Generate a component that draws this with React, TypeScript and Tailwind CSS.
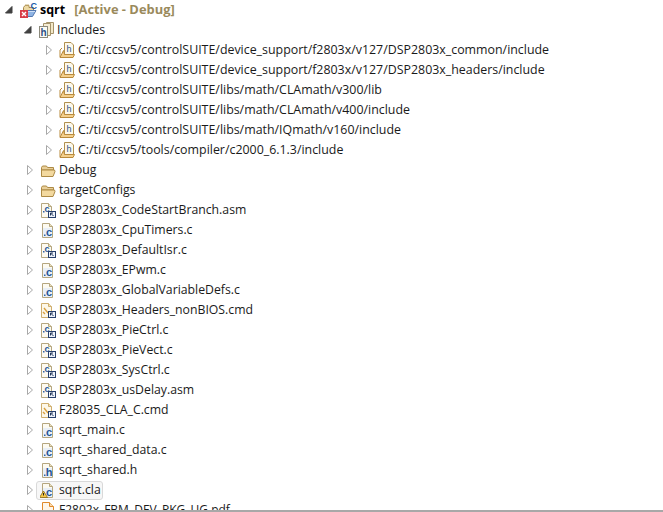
import React from 'react';

type IconKind = 'project' | 'includes' | 'incfolder' | 'folder' | 'linked' | 'c' | 'cmd' | 'h' | 'cla' | 'pdf';

const Sheet = ({ letter }: { letter: string }) => (
  <>
    <path d="M2.5 1.5H9.5L12.5 4.5V15.5H2.5Z" fill="#fdfaf0" stroke="#b5a67f" />
    <path d="M9.5 1.5V4.5H12.5" fill="#e9dfbe" stroke="#b5a67f" />
    <rect x="3" y="6" width="9" height="9" fill="#e9f0f8" />
    <rect x="4" y="12.5" width="1.5" height="1.5" fill="#2f63a3" />
    <text x="9" y="14" fontSize="11" fontWeight="700" textAnchor="middle" fill="#1f5596" fontFamily="'Liberation Sans', sans-serif">{letter}</text>
  </>
);

const LinkBadge = () => (
  <>
    <rect x="8.5" y="9.5" width="7" height="6" fill="#eef3fa" stroke="#27406b" />
    <path d="M10.5 11L13.5 14M10.5 11H13M10.5 11V13.5" fill="none" stroke="#1d3358" />
  </>
);

const Icon = ({ kind }: { kind: IconKind }) => {
  if (kind === 'project') {
    return (
      <svg width="18" height="16" viewBox="0 0 18 16" className="shrink-0">
        <path d="M4.5 5.5L6 3.5H10V5.5H14.5V10H4.5Z" fill="#ecd9a4" stroke="#a8894c" />
        <path d="M6 3H10" stroke="#c9b27a" />
        <path d="M2 14.5L5.5 8.5H17L13.5 14.5Z" fill="#8fb4e4" stroke="#5278b0" />
        <path d="M3 13.5L6 9.5H16" fill="none" stroke="#cfe0f5" />
        <text x="11.5" y="6.5" fontSize="9" fontWeight="700" fill="#1a5aa8" fontFamily="'Liberation Sans', sans-serif">C</text>
        <rect x="1" y="8" width="8" height="8" fill="#d83c48" />
        <path d="M3 10L7 14M7 10L3 14" stroke="#fff" strokeWidth="1.4" />
      </svg>
    );
  }
  if (kind === 'includes') {
    return (
      <svg width="16" height="16" viewBox="0 0 16 16" className="shrink-0">
        <path d="M8.5 .5H15.5V11.5H8.5Z" fill="#f3e8c8" stroke="#a5936a" />
        <path d="M5.5 1.5H12.5V13.5H5.5Z" fill="#f6edd3" stroke="#a5936a" />
        <rect x="1.5" y="4.5" width="8" height="11" fill="#fbfbf4" stroke="#8c8a7c" />
        <text x="5.5" y="13.5" fontSize="10" fontWeight="700" textAnchor="middle" fill="#2c4f86" fontFamily="'Liberation Sans', sans-serif">h</text>
      </svg>
    );
  }
  if (kind === 'incfolder') {
    return (
      <svg width="16" height="16" viewBox="0 0 16 16" className="shrink-0">
        <path d="M1 15V8L3 6" fill="none" stroke="#b98a3c" />
        <path d="M5.5 .5H12L14.5 3V12.5H5.5Z" fill="#fdf8ea" stroke="#b0904f" />
        <text x="10" y="10" fontSize="9" fontWeight="400" textAnchor="middle" fill="#2c4f86" fontFamily="'Liberation Sans', sans-serif">h</text>
        <path d="M1 15.5L4.5 8.5L5.5 12.5H15.5L14 15.5Z" fill="#f5cf8c" stroke="#b98a3c" />
      </svg>
    );
  }
  if (kind === 'folder') {
    return (
      <svg width="16" height="16" viewBox="0 0 16 16" className="shrink-0">
        <path d="M1.5 5.5L2.5 4H6.5L7.5 5.5H13.5V8H1.5Z" fill="#e9cf9a" stroke="#ad8a45" />
        <path d="M1.5 14.5V8H14.5L15 9.5L13 14.5Z" fill="#f3d99f" stroke="#ad8a45" />
      </svg>
    );
  }
  if (kind === 'linked') {
    return (
      <svg width="16" height="16" viewBox="0 0 16 16" className="shrink-0">
        <path d="M1.5 1.5H8.5L11.5 4.5V15.5H1.5Z" fill="#fdfaf0" stroke="#b5a67f" />
        <path d="M8.5 1.5V4.5H11.5" fill="#e9dfbe" stroke="#b5a67f" />
        <rect x="3" y="9" width="1.5" height="1.5" fill="#2f63a3" />
        <text x="7" y="10" fontSize="9" fontWeight="700" textAnchor="middle" fill="#1f5596" fontFamily="'Liberation Sans', sans-serif">c</text>
        <LinkBadge />
      </svg>
    );
  }
  if (kind === 'cmd') {
    return (
      <svg width="16" height="16" viewBox="0 0 16 16" className="shrink-0">
        <path d="M1.5 1.5H8.5L11.5 4.5V15.5H1.5Z" fill="#fdf8ea" stroke="#cfae6e" />
        <path d="M8.5 1.5V4.5H11.5" fill="#f3e2b8" stroke="#cfae6e" />
        <path d="M4 6L8 11M3 10L5 12" stroke="#d8a040" strokeWidth="1.4" />
        <LinkBadge />
      </svg>
    );
  }
  if (kind === 'pdf') {
    return (
      <svg width="16" height="16" viewBox="0 0 16 16" className="shrink-0">
        <path d="M2.5 .5H9.5L13.5 4.5V15.5H2.5Z" fill="#fff7ea" stroke="#e08a2c" />
        <path d="M9.5 .5V4.5H13.5" fill="#f9dcb0" stroke="#e08a2c" />
      </svg>
    );
  }
  return (
    <svg width="16" height="16" viewBox="0 0 16 16" className="shrink-0">
      <Sheet letter={kind === 'h' ? 'h' : 'c'} />
      {kind === 'cla' && (
        <>
          <path d="M3.5 9L7.5 15.5H-.5Z" fill="#f7c948" stroke="#8a6a14" strokeWidth=".8" />
          <path d="M3.5 11V13.5" stroke="#222" />
        </>
      )}
    </svg>
  );
};

const Arrow = ({ open }: { open?: boolean }) => (
  <svg width="8" height="10" viewBox="0 0 8 10" className="shrink-0 mr-[6px]">
    {open ? (
      <path d="M7 1.5V8H.5Z" fill="#404040" stroke="#404040" strokeLinejoin="round" />
    ) : (
      <path d="M1.5 .5L6.5 5L1.5 9.5Z" fill="#fff" stroke="#a8a8a8" />
    )}
  </svg>
);

const files: { name: string; kind: IconKind }[] = [
  { name: 'DSP2803x_CodeStartBranch.asm', kind: 'linked' },
  { name: 'DSP2803x_CpuTimers.c', kind: 'c' },
  { name: 'DSP2803x_DefaultIsr.c', kind: 'linked' },
  { name: 'DSP2803x_EPwm.c', kind: 'c' },
  { name: 'DSP2803x_GlobalVariableDefs.c', kind: 'c' },
  { name: 'DSP2803x_Headers_nonBIOS.cmd', kind: 'cmd' },
  { name: 'DSP2803x_PieCtrl.c', kind: 'linked' },
  { name: 'DSP2803x_PieVect.c', kind: 'linked' },
  { name: 'DSP2803x_SysCtrl.c', kind: 'linked' },
  { name: 'DSP2803x_usDelay.asm', kind: 'linked' },
  { name: 'F28035_CLA_C.cmd', kind: 'cmd' },
  { name: 'sqrt_main.c', kind: 'c' },
  { name: 'sqrt_shared_data.c', kind: 'c' },
  { name: 'sqrt_shared.h', kind: 'h' },
];

const includes = [
  'C:/ti/ccsv5/controlSUITE/device_support/f2803x/v127/DSP2803x_common/include',
  'C:/ti/ccsv5/controlSUITE/device_support/f2803x/v127/DSP2803x_headers/include',
  'C:/ti/ccsv5/controlSUITE/libs/math/CLAmath/v300/lib',
  'C:/ti/ccsv5/controlSUITE/libs/math/CLAmath/v400/include',
  'C:/ti/ccsv5/controlSUITE/libs/math/IQmath/v160/include',
  'C:/ti/ccsv5/tools/compiler/c2000_6.1.3/include',
];

const App: React.FC = () => {
  return (
    <div className="h-[512px] w-[663px] overflow-hidden bg-white font-['Open_Sans','Noto_Sans',sans-serif] text-[12.25px] text-[#1a1a1a] relative">
      <div className="flex h-5 items-center pl-[5px]">
        <Arrow open />
        <Icon kind="project" />
        <span className="ml-[3px] text-[12.5px] font-bold text-black">sqrt</span>
        <span className="ml-[9px] text-[12.9px] font-bold text-[#9a8a5c]">[Active - Debug]</span>
      </div>
      <div className="flex h-5 items-center pl-[24px]">
        <Arrow open />
        <Icon kind="includes" />
        <span className="ml-[3px] text-[12.4px]">Includes</span>
      </div>
      {includes.map(path => (
        <div key={path} className="flex h-5 items-center pl-[45px]">
          <Arrow />
          <Icon kind="incfolder" />
          <span className="ml-[3px] whitespace-nowrap text-[12.4px]">{path}</span>
        </div>
      ))}
      {['Debug', 'targetConfigs'].map(name => (
        <div key={name} className="flex h-5 items-center pl-[26px]">
          <Arrow />
          <Icon kind="folder" />
          <span className="ml-[3px]">{name}</span>
        </div>
      ))}
      {files.map(f => (
        <div key={f.name} className="flex h-5 items-center pl-[26px]">
          <Arrow />
          <Icon kind={f.kind} />
          <span className="ml-[3px]">{f.name}</span>
        </div>
      ))}
      <div className="flex h-5 items-center pl-[26px]">
        <Arrow />
        <div className="-ml-[4px] flex h-[19px] items-center rounded-[3px] border border-[#d9d9d9] bg-[#f7f7f7] pl-[3px] pr-px">
          <Icon kind="cla" />
          <span className="ml-[3px]">sqrt.cla</span>
        </div>
      </div>
      <div className="flex h-5 items-center pl-[26px]">
        <Arrow />
        <Icon kind="pdf" />
        <span className="ml-[3px] text-[12px]">F2802x_FBM_DEV_PKG_UG.pdf</span>
      </div>
      <div className="absolute bottom-0 left-0 h-[2px] w-full bg-[#a8a8a8]" />
    </div>
  );
};

export default App;
